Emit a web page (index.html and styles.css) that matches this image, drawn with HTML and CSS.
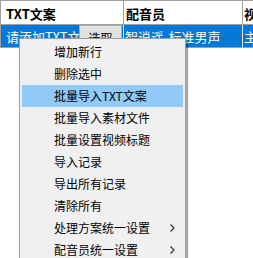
FILE: index.html
```html
<!DOCTYPE html>
<html>
<head>
<meta charset="utf-8">
<link rel="stylesheet" href="styles.css">
</head>
<body>
<div class="grid">
  <div class="row head">
    <div class="cell c1">TXT文案</div>
    <div class="cell c2">配音员</div>
    <div class="cell c3">视频标题</div>
  </div>
  <div class="row sel">
    <div class="cell c1 editcell">
      <span class="edit">请添加TXT文案</span>
      <span class="btn">选取</span>
    </div>
    <div class="cell c2">智逍遥-标准男声</div>
    <div class="cell c3">主标题</div>
  </div>
</div>
<div class="menu">
  <div class="item">增加新行</div>
  <div class="item">删除选中</div>
  <div class="item hot">批量导入TXT文案</div>
  <div class="item">批量导入素材文件</div>
  <div class="item">批量设置视频标题</div>
  <div class="item">导入记录</div>
  <div class="item">导出所有记录</div>
  <div class="item">清除所有</div>
  <div class="item sub">处理方案统一设置<svg class="arr" width="5" height="8" viewBox="0 0 5 8"><path d="M0.5 0.5 L4 4 L0.5 7.5" fill="none" stroke="#333" stroke-width="1.2"/></svg></div>
  <div class="item sub">配音员统一设置<svg class="arr" width="5" height="8" viewBox="0 0 5 8"><path d="M0.5 0.5 L4 4 L0.5 7.5" fill="none" stroke="#333" stroke-width="1.2"/></svg></div>
</div>
</body>
</html>
```
FILE: styles.css
```css
html, body {
  margin: 0;
  padding: 0;
  background: #fff;
  overflow: hidden;
  width: 253px;
  height: 258px;
}
body {
  font-family: "Noto Sans CJK SC", "Microsoft YaHei", sans-serif;
  font-size: 12px;
  color: #000;
  position: relative;
}
.grid {
  border-top: 1px solid #a0a0a0;
  border-left: 1px solid #a0a0a0;
  width: 252px;
  overflow: hidden;
}
.row {
  display: flex;
}
.cell {
  box-sizing: border-box;
  border-right: 1px solid #a0a0a0;
  border-bottom: 1px solid #a0a0a0;
  white-space: nowrap;
  overflow: hidden;
  display: flex;
  align-items: center;
  flex: none;
}
.c1 { width: 123px; }
.c2 { width: 119px; }
.c3 { width: 120px; }
.head .cell {
  height: 24px;
  font-weight: bold;
  font-size: 13px;
  padding-left: 5px;
  padding-top: 1px;
}
.head .c2 { padding-left: 2px; }
.head .c3 { padding-left: 1px; }
.sel .cell {
  height: 23px;
  background: #0078d7;
  color: #fff;
  font-size: 13px;
  border-right-color: #d9e9f7;
  border-bottom-color: #a0a0a0;
}
.sel .c2 { padding-left: 1px; }
.sel .c3 { padding-left: 1px; }
.editcell {
  padding: 0;
  align-items: stretch;
}
.edit {
  width: 78px;
  overflow: hidden;
  padding-left: 5px;
  box-sizing: border-box;
  display: flex;
  align-items: center;
  flex: none;
}
.btn {
  flex: none;
  width: 43px;
  box-sizing: border-box;
  background: #e1e1e1;
  border: 1px solid #adadad;
  color: #000;
  display: flex;
  align-items: center;
  justify-content: center;
  font-size: 12px;
  padding-top: 2px;
}
.menu {
  position: absolute;
  left: 19px;
  top: 38px;
  width: 167px;
  box-sizing: border-box;
  background: #f0f0f0;
  border: 1px solid #a0a0a0;
  padding: 2px 2px 4px 2px;
  box-shadow: 2px 2px 1px rgba(0,0,0,0.35);
}
.item {
  height: 22px;
  line-height: 22px;
  padding-left: 32px;
  position: relative;
  white-space: nowrap;
}
.hot {
  background: #91c9f7;
}
.arr {
  position: absolute;
  right: 8px;
  top: 7px;
}
```
